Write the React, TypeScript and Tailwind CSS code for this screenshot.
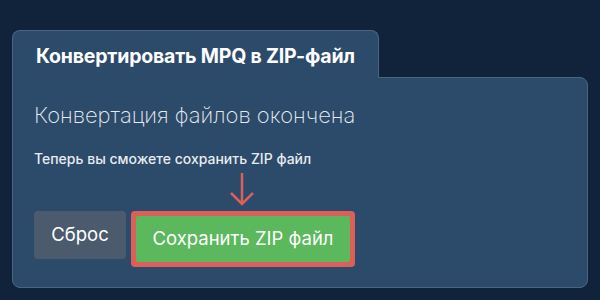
import React from "react";

export default function App() {
  return (
    <div className="w-[600px] h-[300px] bg-[#11233a] pt-[30px] pl-[12px]" style={{ fontFamily: "Inter, 'Noto Sans', sans-serif" }}>
      <div className="flex flex-col w-[576px]">
        <div className="relative z-10 -mb-px w-[367px] h-[48px] bg-[#2c4a6a] border border-b-0 border-[#4a6484] rounded-t-[8px] flex items-center pl-[23px] pt-[4px]">
          <span className="text-white font-bold text-[19.5px] tracking-[-0.2px]">Конвертировать MPQ в ZIP-файл</span>
        </div>
        <div className="h-[211px] bg-[#2c4a6a] border border-[#4a6484] rounded-b-[8px] rounded-tr-[8px] pl-[21px] pt-[22px]">
          <div className="text-[#e6ebf0] text-[22px] font-extralight leading-[30px]">Конвертация файлов окончена</div>
          <div className="mt-[19px] text-[#e8ecf0] text-[14px] font-medium leading-[20px]">Теперь вы сможете сохранить ZIP файл</div>
          <div className="flex justify-start pl-[193px] mt-[2px] h-[40px]">
            <svg width="30" height="38" viewBox="0 0 30 38">
              <path d="M15 2 V33 M4 22 L15 33 L26 22" stroke="#dc5f5a" strokeWidth="2.5" fill="none" />
            </svg>
          </div>
          <div className="flex items-start gap-[5px]">
            <button className="w-[92px] h-[48px] rounded-[4px] bg-[#4b5b6d] text-white text-[18.5px]">Сброс</button>
            <div className="rounded-[4px] bg-[#dc5f5a] p-[5px]">
              <button className="w-[214px] h-[46px] rounded-[2px] bg-[#5cb85c] text-white text-[18.5px]">Сохранить ZIP файл</button>
            </div>
          </div>
        </div>
      </div>
    </div>
  );
}
